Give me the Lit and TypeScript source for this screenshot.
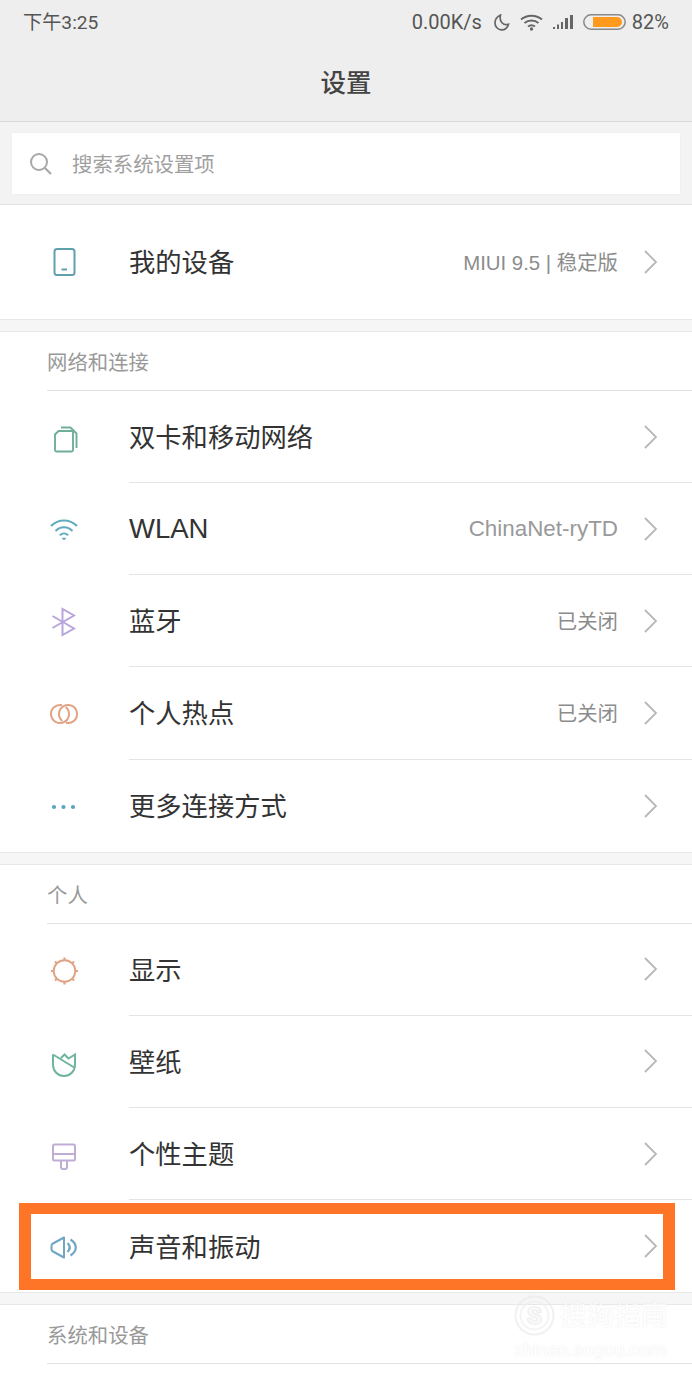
import { LitElement, html, css, svg } from "lit";
import { customElement } from "lit/decorators.js";

const icons: Record<string, unknown> = {
  device: svg`<rect x="5.500" y="2" width="20" height="26" rx="2.500" fill="none" stroke="#5f9fae" stroke-width="2"/><path d="M12.500 22.500h5.500" stroke="#5f9fae" stroke-width="2"/>`,
  sim: svg`<g fill="none" stroke="#6fae99" stroke-width="1.900"><path d="M6 11.500l3.500-3.500h13a1.500 1.500 0 0 1 1.500 1.500v17.500a1.500 1.500 0 0 1-1.500 1.500h-15a1.500 1.500 0 0 1-1.500-1.500z"/><path d="M12 4.500h9.500l6 6v14.500"/></g>`,
  wifi: svg`<g fill="none" stroke="#62a9bf" stroke-width="2"><path d="M2 11c7.500-7.500 18.500-7.500 26 0"/><path d="M6.500 16c5-5 12-5 17 0"/><path d="M10.800 20.200c2.500-2.300 5.900-2.300 8.400 0"/></g><path d="M12.500 22.800h5l-2.500 2.700z" fill="#62a9bf"/>`,
  bt: svg`<path d="M3.500 9 25 21.500 13.500 28V2L25 8.500 3.500 21" fill="none" stroke="#b9a5de" stroke-width="2"/>`,
  hotspot: svg`<g fill="none" stroke="#e0a383" stroke-width="2"><path d="M16.700 8.040A9 9 0 1 1 13.080 6.240"/><path d="M13.300 21.960A9 9 0 1 1 16.920 23.760"/></g>`,
  more: svg`<g fill="#5ba3c0"><circle cx="5" cy="15" r="2.100"/><circle cx="14.500" cy="15" r="2.100"/><circle cx="24" cy="15" r="2.100"/></g>`,
  display: svg`<circle cx="15.500" cy="15" r="10.800" fill="none" stroke="#e0a383" stroke-width="1.900"/><g stroke="#e0a383" stroke-width="2.200"><path d="M15.500 1.500v3M15.500 25.500v3M2 15h3M26 15h3M6 5.500l2 2M25 5.500l-2 2M6 24.500l2-2M25 24.500l-2-2"/></g>`,
  tulip: svg`<path d="M4 6.500V17a11 11 0 0 0 22 0V6.500L19.500 10.500 15.500 6.500 12 10M4 6.500 26 20" fill="none" stroke="#6fb49c" stroke-width="2"/>`,
  brush: svg`<path d="M5.500 4.500h19a1.500 1.500 0 0 1 1.500 1.500v13a1.500 1.500 0 0 1-1.500 1.500h-19A1.500 1.500 0 0 1 4 19V6a1.500 1.500 0 0 1 1.500-1.500zM4 14h22M12 20.500V27a2 2 0 0 0 2 2h2a2 2 0 0 0 2-2v-6.500" fill="none" stroke="#bfadd6" stroke-width="2"/>`,
  sound: svg`<path d="M15 5.500 4 11.500a2.500 2.500 0 0 0-1.500 2.300v3.400A2.500 2.500 0 0 0 4 19.500l11 6z" fill="none" stroke="#6ea6c4" stroke-width="2" stroke-linejoin="round"/><path d="M18.500 11c2.800 2.800 2.800 6.200 0 9M21.500 7.500c7 4.500 7 11.500 0 16" fill="none" stroke="#6ea6c4" stroke-width="2.200"/>`,
};

type Row = { icon: string; title: string; value?: string; titleLatin?: boolean; valueKind?: string };
const groups: { label: string; rows: Row[] }[] = [
  { label: "网络和连接", rows: [
    { icon: "sim", title: "双卡和移动网络" },
    { icon: "wifi", title: "WLAN", titleLatin: true, value: "ChinaNet-ryTD", valueKind: "latin" },
    { icon: "bt", title: "蓝牙", value: "已关闭" },
    { icon: "hotspot", title: "个人热点", value: "已关闭" },
    { icon: "more", title: "更多连接方式" },
  ]},
  { label: "个人", rows: [
    { icon: "display", title: "显示" },
    { icon: "tulip", title: "壁纸" },
    { icon: "brush", title: "个性主题" },
    { icon: "sound", title: "声音和振动" },
  ]},
];

@customElement("app-root")
export class AppRoot extends LitElement {
  static styles = css`
    :host { display: block; position: relative; width: 692px; height: 1384px; overflow: hidden; background: #fff;
      font-family: Roboto, "Noto Sans CJK SC", sans-serif; color: #333; }
    .top { background: #eeeeee; height: 121px; border-bottom: 1px solid #d9d9d9; display: flex; flex-direction: column; }
    .status { height: 44px; display: flex; align-items: center; justify-content: space-between; padding: 0 23px; font-size: 20px; color: #555; }
    .clock { font-size: 19.200px; padding-bottom: 2px; }
    .status-right { display: flex; align-items: center; }
    .speed { margin-right: 12px; }
    .moon { margin-right: 10px; }
    .wifi-s { margin-right: 10px; }
    .signal { margin-right: 8px; }
    .batt { margin-right: 6px; }
    .title { flex: 1; display: flex; align-items: center; justify-content: center; font-size: 25.500px; font-weight: 500; color: #444; padding-bottom: 4px; }
    .searchwrap { background: #f3f3f3; border-bottom: 1px solid #e2e2e2; padding: 11px 12px 10px; box-sizing: border-box; height: 83px; }
    .search { height: 61px; background: #fff; display: flex; align-items: center; padding-left: 17px; gap: 19px; font-size: 20.400px; color: #a0a0a0; box-shadow: 0 0 1px #e0e0e0; }
    .search span { padding-bottom: 2px; }
    .row { height: 92.150px; display: flex; align-items: stretch; box-sizing: border-box; }
    .row.big { height: 114px; }
    .ico { width: 129px; flex: none; display: flex; align-items: center; padding: 2px 0 0 49px; box-sizing: border-box; }
    .row.big .ico { padding-top: 0; }
    .body { flex: 1; display: flex; align-items: center; border-bottom: 1px solid #e4e4e4; padding-right: 34px; }
    .row:last-child .body, .row.big .body { border-bottom: none; }
    .name { flex: 1; font-size: 26.300px; color: #333; padding-bottom: 2px; }
    .row.big .name { padding-bottom: 4px; }
    .name.latin { font-family: "Liberation Sans", sans-serif; font-size: 27.500px; padding-bottom: 0; }
    .val { font-size: 20.400px; color: #8c8c8c; margin-right: 25px; padding-bottom: 1px; }
    .row.big .val { padding-bottom: 3px; }
    .val.mixed { font-family: "Liberation Sans", "Noto Sans CJK SC", sans-serif; }
    .val.latin { font-family: "Liberation Sans", sans-serif; font-size: 22.400px; color: #999; padding-bottom: 0; }
    .chev { flex: none; }
    .gap { height: 11px; background: #f6f6f6; border-top: 1px solid #e8e8e8; border-bottom: 1px solid #e8e8e8; }
    .label { height: 58px; margin-left: 47px; display: flex; align-items: center; font-size: 20.400px; color: #999; border-bottom: 1px solid #e2e2e2; }
    .highlight { position: absolute; left: 19px; top: 1203px; width: 656px; height: 87px; box-sizing: border-box; border: solid #ff7527; border-width: 11px 12px; }
    .wm { position: absolute; left: 514px; top: 1295px; width: 160px; color: #fff; text-shadow: 0 0 2px #dcdcdc; opacity: .6; }
    .wm-top { display: flex; align-items: center; gap: 5px; font-size: 27px; line-height: 40px; }
    .wm-s { font-size: 24px; font-weight: 700; fill: #fff; stroke: #e0e0e0; stroke-width: .6px; }
    .wm-url { font-size: 18.500px; line-height: 24px; margin-top: 2px; }
  `;

  private chev() {
    return html`<svg class="chev" width="15" height="24" viewBox="0 0 15 24"><path d="M2 1l11 11L2 23" fill="none" stroke="#b8b8b8" stroke-width="1.800"/></svg>`;
  }

  private row(r: Row, big = false) {
    return html`<div class="row ${big ? "big" : ""}">
      <div class="ico"><svg width="30" height="30" viewBox="0 0 30 30">${icons[r.icon]}</svg></div>
      <div class="body"><span class="name ${r.titleLatin ? "latin" : ""}">${r.title}</span>${r.value ? html`<span class="val ${r.valueKind ?? ""}">${r.value}</span>` : ""}${this.chev()}</div>
    </div>`;
  }

  render() {
    return html`
      <div class="top">
        <div class="status">
          <span class="clock">下午3:25</span>
          <div class="status-right">
            <span class="speed">0.00K/s</span>
            <svg class="moon" width="16" height="17" viewBox="0 0 16 17"><path d="M6.500 1C2.800 2.800 1 5.500 1 8.800a6.800 6.800 0 0 0 13.500 1.400C9.500 12 4.800 7.500 6.500 1z" fill="none" stroke="#666" stroke-width="1.700"/></svg>
            <svg class="wifi-s" width="23" height="17" viewBox="0 0 23 17"><g fill="none" stroke="#666" stroke-width="2"><path d="M1 5.500c6-5 15-5 21 0"/><path d="M4.500 9c4-3.300 10-3.300 14 0"/><path d="M8 12.500c2-1.500 5-1.500 7 0"/></g><circle cx="11.500" cy="15" r="1.700" fill="#666"/></svg>
            <svg class="signal" width="22" height="16" viewBox="0 0 22 16"><g fill="#666"><rect x="0" y="13" width="2" height="2"/><rect x="4" y="10.500" width="2" height="4.500"/><rect x="8" y="8" width="2" height="7"/><rect x="12" y="4" width="3" height="11"/><rect x="17" y="1" width="3" height="14"/></g></svg>
            <svg class="batt" width="43" height="16" viewBox="0 0 43 16"><rect x=".8" y=".8" width="41.400" height="14.400" rx="7.200" fill="none" stroke="#888" stroke-width="1.500"/><path d="M10 3h24a5 5 0 0 1 0 10H10z" fill="#ff9a1f"/></svg>
            <span>82%</span>
          </div>
        </div>
        <div class="title">设置</div>
      </div>
      <div class="searchwrap">
        <div class="search">
          <svg width="24" height="24" viewBox="0 0 24 24"><circle cx="10" cy="10" r="8" fill="none" stroke="#a8a8a8" stroke-width="2"/><path d="M16 16l6 6" stroke="#a8a8a8" stroke-width="2.200"/></svg>
          <span>搜索系统设置项</span>
        </div>
      </div>
      ${this.row({ icon: "device", title: "我的设备", value: "MIUI 9.5 | 稳定版", valueKind: "mixed" }, true)}
      ${groups.map(g => html`<div class="gap"></div><div class="label">${g.label}</div><div>${g.rows.map(r => this.row(r))}</div>`)}
      <div class="gap"></div>
      <div class="label">系统和设备</div>
      <div class="highlight"></div>
      <div class="wm">
        <div class="wm-top">
          <svg width="41" height="41" viewBox="0 0 41 41"><circle cx="20.500" cy="20.500" r="19" fill="none" stroke="#e9e9e9" stroke-width="2"/><circle cx="20.500" cy="20.500" r="14" fill="none" stroke="#eeeeee" stroke-width="2"/><text class="wm-s" x="20.500" y="29" text-anchor="middle">S</text></svg>
          <span>搜狗指南</span>
        </div>
        <div class="wm-url">zhinan.sogou.com</div>
      </div>
    `;
  }
}
